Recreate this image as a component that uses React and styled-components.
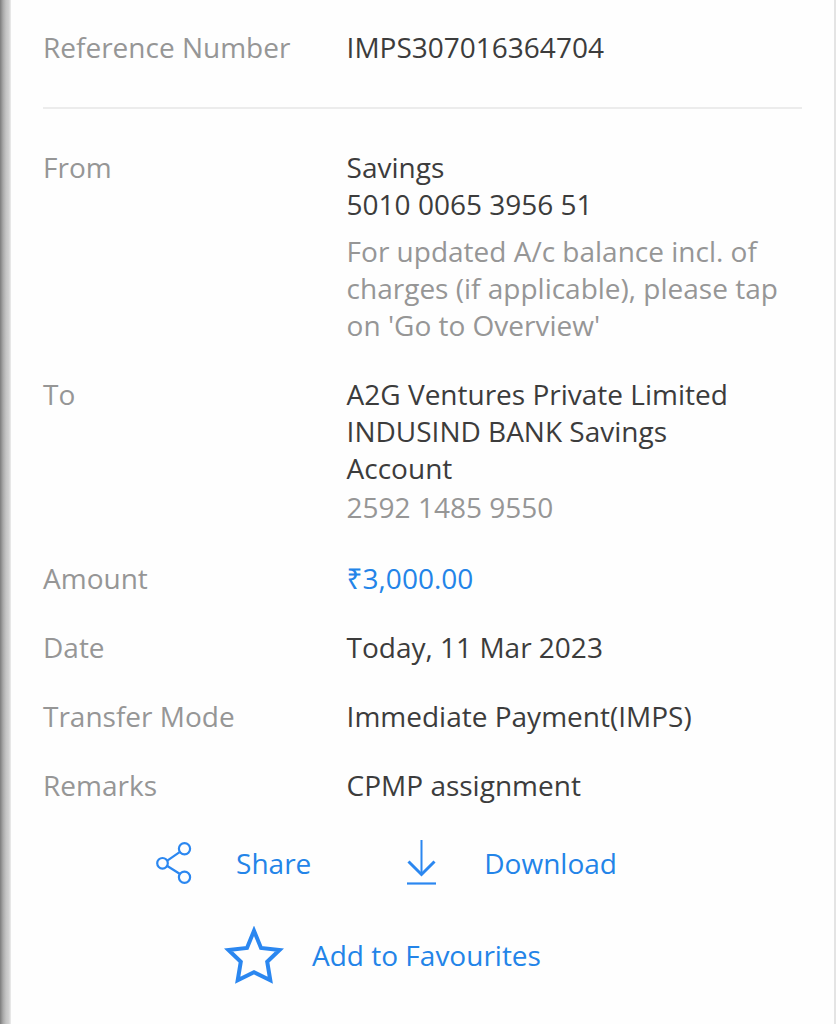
import React from "react";
import styled, { createGlobalStyle } from "styled-components";

const Global = createGlobalStyle`
  * { box-sizing: border-box; }
  body {
    margin: 0;
    background: #fefefe;
    font-family: "Open Sans", "Noto Sans", sans-serif;
  }
`;

const Screen = styled.div`
  padding-left: 11px;
  background: linear-gradient(to right, #7c7c7c, #a8a8a8 3px, #c4c4c4 6px, #d2d2d2 9px, #eeeeee 11px);
`;

const Page = styled.main`
  min-height: 100vh;
  padding: 29px 32px 36px;
  background: #fefefe;
  border-right: 2px solid #e4e4e4;
`;

const Details = styled.dl`
  margin: 0;
  display: grid;
  gap: 32px;
`;

const Row = styled.div`
  display: grid;
  grid-template-columns: 2fr 3fr;
  font-size: 28px;
  line-height: 37px;
`;

const Label = styled.dt`
  color: #969696;
`;

const Value = styled.dd`
  margin: 0;
  padding-right: 12px;
  color: ${(p) => (p.$accent ? "#2384e8" : "#3c3c3c")};
`;

const Line = styled.div``;

const Note = styled.div`
  margin-top: 10px;
  color: #969696;
`;

const AccountNumber = styled.div`
  padding: 2px 0;
  color: #969696;
`;

const Divider = styled.hr`
  margin: 41px 0 40px;
  border: 0;
  border-top: 2px solid #ececec;
`;

const Actions = styled.div`
  display: grid;
  gap: 40px;
  margin-top: 36px;
  padding-right: 72px;
`;

const ActionRow = styled.div`
  display: flex;
  flex-wrap: wrap;
  justify-content: center;
  gap: 40px 96px;
`;

const Action = styled.button`
  display: flex;
  align-items: center;
  gap: ${(p) => p.$gap}px;
  padding: 0;
  border: 0;
  background: none;
  color: #2384e8;
  font: inherit;
  font-size: 28px;
  line-height: 37px;
  cursor: pointer;

  svg {
    flex: none;
    fill: none;
    stroke: #2b87f0;
  }
`;

const FavouriteAction = styled(Action)`
  padding-right: 8px;
`;

const ShareIcon = () => (
  <svg width="36" height="46" viewBox="0 0 36 46" strokeWidth="2.2" aria-hidden="true">
    <circle cx="6.5" cy="23.3" r="5.3" />
    <circle cx="28.5" cy="8.7" r="5.6" />
    <circle cx="28.5" cy="37.2" r="5.6" />
    <path d="M11.3 20.6 23.6 12.2M11.3 26 23.6 33.8" />
  </svg>
);

const DownloadIcon = () => (
  <svg width="29" height="46" viewBox="0 0 29 46" aria-hidden="true">
    <path d="M14.5 0V35" strokeWidth="2" />
    <path d="M1.5 21.5 14.5 34.5 27.5 21.5" strokeWidth="3" />
    <path d="M0 43.5H29" strokeWidth="2.2" />
  </svg>
);

const StarIcon = () => (
  <svg width="60" height="58" viewBox="0 0 60 58" strokeWidth="4" strokeMiterlimit="10" aria-hidden="true">
    <path d="M30 4.8 37 22 55.5 24 43.2 35.7 46.3 54.3 30 46.2 13.7 54.3 16.8 35.7 4.5 24 23 22Z" />
  </svg>
);

export default function App() {
  return (
    <>
      <Global />
      <Screen>
        <Page>
          <Details>
            <Row><Label>Reference Number</Label><Value>IMPS307016364704</Value></Row>
          </Details>
          <Divider />
          <Details>
            <Row>
              <Label>From</Label>
              <Value>
                <Line>Savings</Line>
                <Line>5010 0065 3956 51</Line>
                <Note>For updated A/c balance incl. of charges (if applicable), please tap on 'Go to Overview'</Note>
              </Value>
            </Row>
            <Row>
              <Label>To</Label>
              <Value>
                <Line>A2G Ventures Private Limited</Line>
                <Line>INDUSIND BANK Savings</Line>
                <Line>Account</Line>
                <AccountNumber>2592 1485 9550</AccountNumber>
              </Value>
            </Row>
            <Row><Label>Amount</Label><Value $accent>₹3,000.00</Value></Row>
            <Row><Label>Date</Label><Value>Today, 11 Mar 2023</Value></Row>
            <Row><Label>Transfer Mode</Label><Value>Immediate Payment(IMPS)</Value></Row>
            <Row><Label>Remarks</Label><Value>CPMP assignment</Value></Row>
          </Details>
          <Actions>
            <ActionRow>
              <Action type="button" $gap={44}><ShareIcon />Share</Action>
              <Action type="button" $gap={48}><DownloadIcon />Download</Action>
            </ActionRow>
            <ActionRow>
              <FavouriteAction type="button" $gap={28}><StarIcon />Add to Favourites</FavouriteAction>
            </ActionRow>
          </Actions>
        </Page>
      </Screen>
    </>
  );
}
